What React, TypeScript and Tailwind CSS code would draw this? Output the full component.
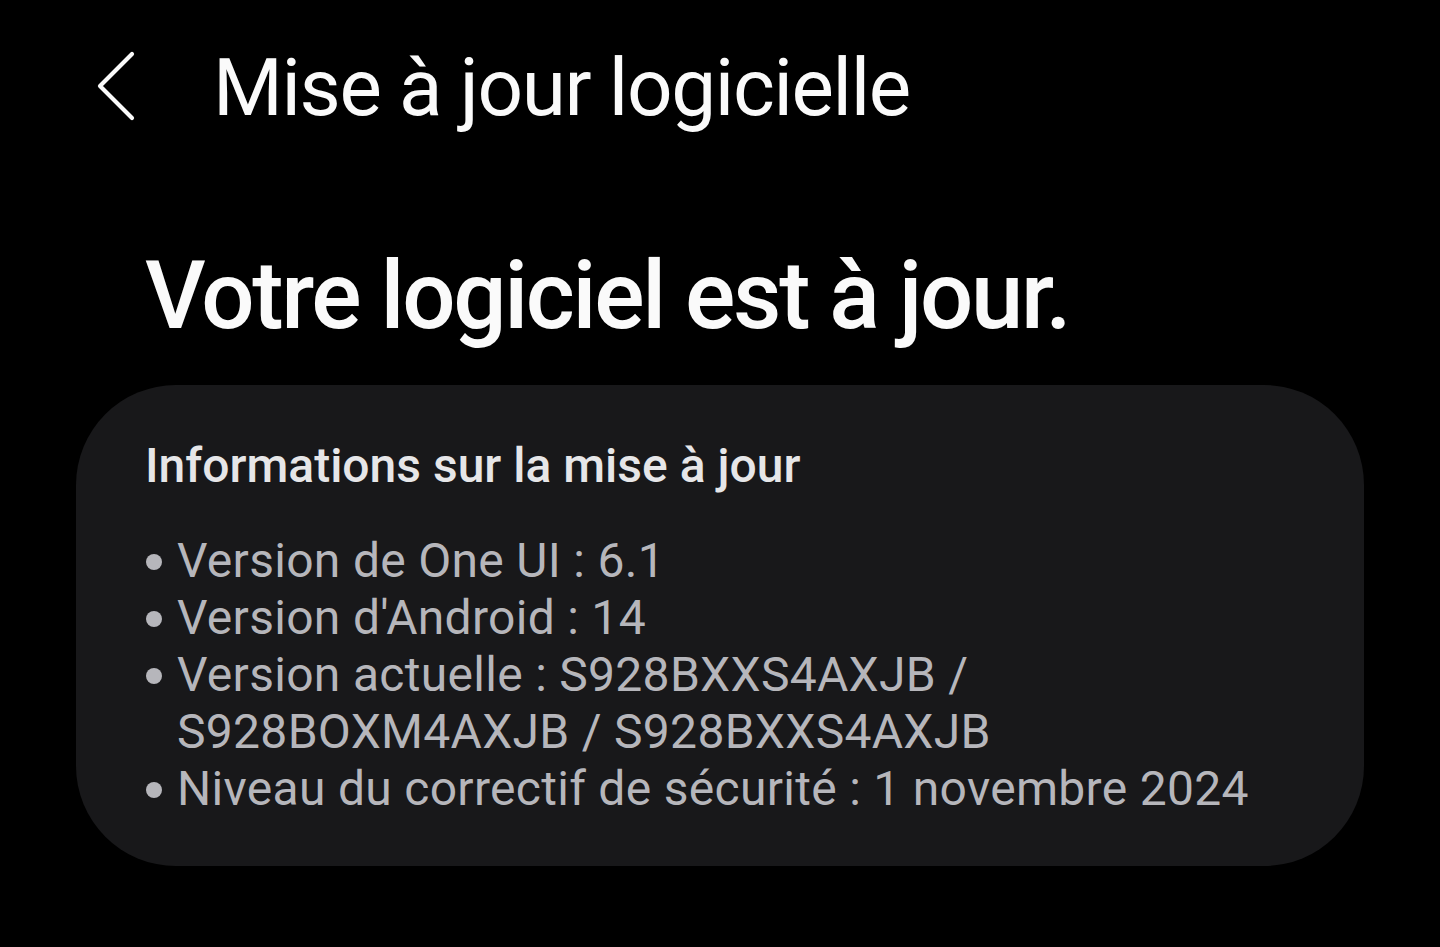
const items = [
  ["Version de One UI : 6.1"],
  ["Version d'Android : 14"],
  ["Version actuelle : S928BXXS4AXJB /", "S928BOXM4AXJB / S928BXXS4AXJB"],
  ["Niveau du correctif de sécurité : 1 novembre 2024"],
];

export default function App() {
  return (
    <div
      className="min-h-screen w-full bg-black text-white"
      style={{ fontFamily: "Roboto, 'Noto Sans', sans-serif" }}
    >
      <header className="flex items-start pl-[89px] pt-[48px]">
        <svg width="54" height="76" viewBox="0 0 54 76" className="shrink-0">
          <path
            d="M43 6 L11 38 L43 70"
            fill="none"
            stroke="#fafafa"
            strokeWidth="4.2"
            strokeLinecap="round"
            strokeLinejoin="round"
          />
        </svg>
        <h1 className="ml-[70px] text-[80px] leading-none tracking-[-1.35px] text-[#fafafa]">
          Mise à jour logicielle
        </h1>
      </header>

      <h2 className="pl-[145px] mt-[121px] text-[94px] leading-none font-medium tracking-[-2.3px] text-[#fafafa]">
        Votre logiciel est à jour.
      </h2>

      <section className="mt-[42px] mx-[76px] rounded-[100px] bg-[#18181a] pl-[69px] pr-8 pt-[53px] pb-[49px]">
        <h3 className="text-[48px] leading-[56px] font-medium tracking-[0px] text-[#e6e6e8]">
          Informations sur la mise à jour
        </h3>
        <ul className="mt-[38px] flex flex-col text-[48px] leading-[57px] tracking-[0.3px] text-[#b6b6bb]">
          {items.map((lines, i) => (
            <li key={i} className="flex">
              <span className="w-[32px] shrink-0 flex pt-[22px]">
                <span className="block w-[16px] h-[16px] rounded-full bg-[#b6b6bb] ml-[1px]" />
              </span>
              <span className="flex flex-col">
                {lines.map((l) => (
                  <span key={l}>{l}</span>
                ))}
              </span>
            </li>
          ))}
        </ul>
      </section>
    </div>
  );
}
